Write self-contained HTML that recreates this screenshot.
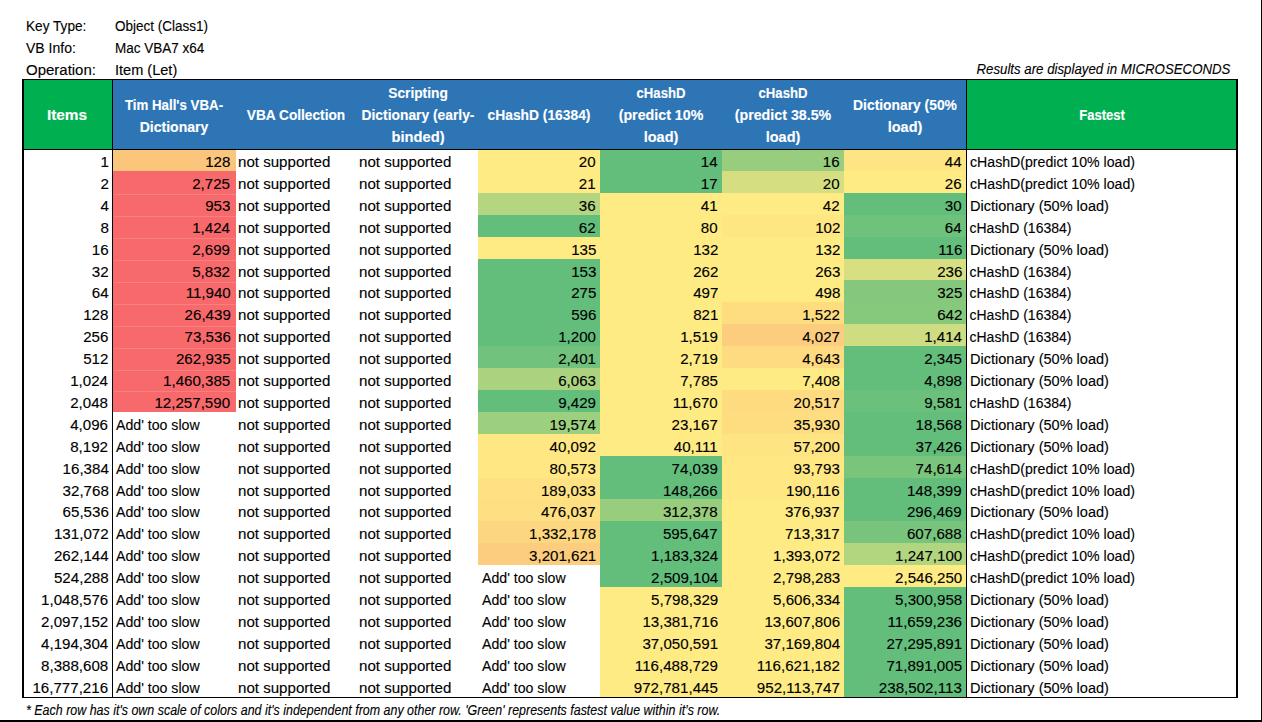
<!DOCTYPE html>
<html><head><meta charset="utf-8"><style>
html,body{margin:0;padding:0;background:#fff;}
body{width:1262px;height:722px;position:relative;overflow:hidden;font-family:"Liberation Sans", sans-serif;font-size:14px;color:#000;}
.a{position:absolute;}
.t{position:absolute;white-space:pre;line-height:1;-webkit-text-stroke:0.12px currentColor;}
.r{transform-origin:100% 0;}
.l{transform-origin:0 0;}
.c{transform-origin:50% 0;}
.h{font-weight:bold;color:#fff;}
.i{font-style:italic;}
</style></head><body>

<div class="a" style="left:1260.6px;top:0;width:1.4px;height:722px;background:#000"></div>
<div class="a" style="left:0;top:720.2px;width:1262px;height:1.8px;background:#000"></div>
<div class="t l " style="top:19.15px;transform:scaleX(0.9730);left:26.00px;">Key Type:</div>
<div class="t l " style="top:19.15px;transform:scaleX(0.9640);left:115.30px;">Object (Class1)</div>
<div class="t l " style="top:40.85px;left:26.00px;">VB Info:</div>
<div class="t l " style="top:40.85px;transform:scaleX(0.9650);left:115.30px;">Mac VBA7 x64</div>
<div class="t l " style="top:62.55px;transform:scaleX(1.0700);left:26.00px;">Operation:</div>
<div class="t l " style="top:62.55px;transform:scaleX(1.0390);left:115.30px;">Item (Let)</div>
<div class="t r i" style="top:62.35px;transform:scaleX(0.9460);right:31.50px;">Results are displayed in MICROSECONDS</div>
<div class="a" style="left:24px;top:80px;width:88.5px;height:69px;background:#00B050"></div>
<div class="a" style="left:112.5px;top:80px;width:854.0px;height:69px;background:#2E75B6"></div>
<div class="a" style="left:966.5px;top:80px;width:270.0px;height:69px;background:#00B050"></div>
<div class="t c h" style="top:108.15px;transform:scaleX(1.1000);left:67.25px;width:0;display:flex;justify-content:center;">Items</div>
<div class="t c h" style="top:98.15px;transform:scaleX(0.9490);left:174.00px;width:0;display:flex;justify-content:center;">Tim Hall's VBA-</div>
<div class="t c h" style="top:120.05px;transform:scaleX(1.0030);left:174.00px;width:0;display:flex;justify-content:center;">Dictionary</div>
<div class="t c h" style="top:108.15px;transform:scaleX(0.9780);left:296.25px;width:0;display:flex;justify-content:center;">VBA Collection</div>
<div class="t c h" style="top:86.15px;transform:scaleX(0.9810);left:417.50px;width:0;display:flex;justify-content:center;">Scripting</div>
<div class="t c h" style="top:108.05px;transform:scaleX(0.9875);left:417.50px;width:0;display:flex;justify-content:center;">Dictionary (early-</div>
<div class="t c h" style="top:129.65px;transform:scaleX(1.0500);left:417.50px;width:0;display:flex;justify-content:center;">binded)</div>
<div class="t c h" style="top:108.15px;transform:scaleX(0.9860);left:539.00px;width:0;display:flex;justify-content:center;">cHashD (16384)</div>
<div class="t c h" style="top:86.15px;transform:scaleX(0.9400);left:661.00px;width:0;display:flex;justify-content:center;">cHashD</div>
<div class="t c h" style="top:108.05px;transform:scaleX(1.0170);left:661.00px;width:0;display:flex;justify-content:center;">(predict 10%</div>
<div class="t c h" style="top:129.65px;transform:scaleX(1.0350);left:661.00px;width:0;display:flex;justify-content:center;">load)</div>
<div class="t c h" style="top:86.15px;transform:scaleX(0.9400);left:783.00px;width:0;display:flex;justify-content:center;">cHashD</div>
<div class="t c h" style="top:108.05px;transform:scaleX(1.0170);left:783.00px;width:0;display:flex;justify-content:center;">(predict 38.5%</div>
<div class="t c h" style="top:129.65px;transform:scaleX(1.0350);left:783.00px;width:0;display:flex;justify-content:center;">load)</div>
<div class="t c h" style="top:98.15px;transform:scaleX(0.9880);left:905.25px;width:0;display:flex;justify-content:center;">Dictionary (50%</div>
<div class="t c h" style="top:120.05px;transform:scaleX(1.0350);left:905.25px;width:0;display:flex;justify-content:center;">load)</div>
<div class="t c h" style="top:108.15px;transform:scaleX(0.9300);left:1101.50px;width:0;display:flex;justify-content:center;">Fastest</div>
<div class="a" style="left:112.5px;top:149.00px;width:123.0px;height:22.00px;background:#FCC57C"></div>
<div class="a" style="left:478px;top:149.00px;width:122px;height:22.00px;background:#FFEB84"></div>
<div class="a" style="left:600px;top:149.00px;width:122px;height:22.00px;background:#63BE7B"></div>
<div class="a" style="left:722px;top:149.00px;width:122px;height:22.00px;background:#98CD7E"></div>
<div class="a" style="left:844px;top:149.00px;width:122.5px;height:22.00px;background:#FEE482"></div>
<div class="t r " style="top:155.05px;transform:scaleX(1.0800);right:1153.50px;">1</div>
<div class="t r " style="top:155.05px;transform:scaleX(1.0800);right:1031.50px;">128</div>
<div class="t l " style="top:155.05px;transform:scaleX(1.0780);left:237.80px;">not supported</div>
<div class="t l " style="top:155.05px;transform:scaleX(1.0780);left:359.30px;">not supported</div>
<div class="t r " style="top:155.05px;transform:scaleX(1.0800);right:666.00px;">20</div>
<div class="t r " style="top:155.05px;transform:scaleX(1.0800);right:544.00px;">14</div>
<div class="t r " style="top:155.05px;transform:scaleX(1.0800);right:422.00px;">16</div>
<div class="t r " style="top:155.05px;transform:scaleX(1.0800);right:300.00px;">44</div>
<div class="t l " style="top:155.05px;transform:scaleX(1.0100);left:969.50px;">cHashD(predict 10% load)</div>
<div class="a" style="left:112.5px;top:170.90px;width:123.0px;height:22.00px;background:#F8696B"></div>
<div class="a" style="left:478px;top:170.90px;width:122px;height:22.00px;background:#FFEB84"></div>
<div class="a" style="left:600px;top:170.90px;width:122px;height:22.00px;background:#63BE7B"></div>
<div class="a" style="left:722px;top:170.90px;width:122px;height:22.00px;background:#D5DF82"></div>
<div class="a" style="left:844px;top:170.90px;width:122.5px;height:22.00px;background:#FFEB84"></div>
<div class="t r " style="top:176.95px;transform:scaleX(1.0800);right:1153.50px;">2</div>
<div class="t r " style="top:176.95px;transform:scaleX(1.0800);right:1031.50px;">2,725</div>
<div class="t l " style="top:176.95px;transform:scaleX(1.0780);left:237.80px;">not supported</div>
<div class="t l " style="top:176.95px;transform:scaleX(1.0780);left:359.30px;">not supported</div>
<div class="t r " style="top:176.95px;transform:scaleX(1.0800);right:666.00px;">21</div>
<div class="t r " style="top:176.95px;transform:scaleX(1.0800);right:544.00px;">17</div>
<div class="t r " style="top:176.95px;transform:scaleX(1.0800);right:422.00px;">20</div>
<div class="t r " style="top:176.95px;transform:scaleX(1.0800);right:300.00px;">26</div>
<div class="t l " style="top:176.95px;transform:scaleX(1.0100);left:969.50px;">cHashD(predict 10% load)</div>
<div class="a" style="left:112.5px;top:192.80px;width:123.0px;height:22.00px;background:#F8696B"></div>
<div class="a" style="left:478px;top:192.80px;width:122px;height:22.00px;background:#B5D580"></div>
<div class="a" style="left:600px;top:192.80px;width:122px;height:22.00px;background:#FFEB84"></div>
<div class="a" style="left:722px;top:192.80px;width:122px;height:22.00px;background:#FFEB84"></div>
<div class="a" style="left:844px;top:192.80px;width:122.5px;height:22.00px;background:#63BE7B"></div>
<div class="a" style="left:113.5px;top:194.30px;width:122.0px;height:1px;background:#F98082"></div>
<div class="t r " style="top:198.85px;transform:scaleX(1.0800);right:1153.50px;">4</div>
<div class="t r " style="top:198.85px;transform:scaleX(1.0800);right:1031.50px;">953</div>
<div class="t l " style="top:198.85px;transform:scaleX(1.0780);left:237.80px;">not supported</div>
<div class="t l " style="top:198.85px;transform:scaleX(1.0780);left:359.30px;">not supported</div>
<div class="t r " style="top:198.85px;transform:scaleX(1.0800);right:666.00px;">36</div>
<div class="t r " style="top:198.85px;transform:scaleX(1.0800);right:544.00px;">41</div>
<div class="t r " style="top:198.85px;transform:scaleX(1.0800);right:422.00px;">42</div>
<div class="t r " style="top:198.85px;transform:scaleX(1.0800);right:300.00px;">30</div>
<div class="t l " style="top:198.85px;transform:scaleX(1.0380);left:969.50px;">Dictionary (50% load)</div>
<div class="a" style="left:112.5px;top:214.70px;width:123.0px;height:22.00px;background:#F8696B"></div>
<div class="a" style="left:478px;top:214.70px;width:122px;height:22.00px;background:#63BE7B"></div>
<div class="a" style="left:600px;top:214.70px;width:122px;height:22.00px;background:#FFEB84"></div>
<div class="a" style="left:722px;top:214.70px;width:122px;height:22.00px;background:#FEE683"></div>
<div class="a" style="left:844px;top:214.70px;width:122.5px;height:22.00px;background:#6EC27C"></div>
<div class="a" style="left:113.5px;top:216.20px;width:122.0px;height:1px;background:#F98082"></div>
<div class="t r " style="top:220.75px;transform:scaleX(1.0800);right:1153.50px;">8</div>
<div class="t r " style="top:220.75px;transform:scaleX(1.0800);right:1031.50px;">1,424</div>
<div class="t l " style="top:220.75px;transform:scaleX(1.0780);left:237.80px;">not supported</div>
<div class="t l " style="top:220.75px;transform:scaleX(1.0780);left:359.30px;">not supported</div>
<div class="t r " style="top:220.75px;transform:scaleX(1.0800);right:666.00px;">62</div>
<div class="t r " style="top:220.75px;transform:scaleX(1.0800);right:544.00px;">80</div>
<div class="t r " style="top:220.75px;transform:scaleX(1.0800);right:422.00px;">102</div>
<div class="t r " style="top:220.75px;transform:scaleX(1.0800);right:300.00px;">64</div>
<div class="t l " style="top:220.75px;left:969.50px;">cHashD (16384)</div>
<div class="a" style="left:112.5px;top:236.60px;width:123.0px;height:22.00px;background:#F8696B"></div>
<div class="a" style="left:478px;top:236.60px;width:122px;height:22.00px;background:#FFEB84"></div>
<div class="a" style="left:600px;top:236.60px;width:122px;height:22.00px;background:#FFEB84"></div>
<div class="a" style="left:722px;top:236.60px;width:122px;height:22.00px;background:#FFEB84"></div>
<div class="a" style="left:844px;top:236.60px;width:122.5px;height:22.00px;background:#63BE7B"></div>
<div class="a" style="left:113.5px;top:238.10px;width:122.0px;height:1px;background:#F98082"></div>
<div class="t r " style="top:242.65px;transform:scaleX(1.0800);right:1153.50px;">16</div>
<div class="t r " style="top:242.65px;transform:scaleX(1.0800);right:1031.50px;">2,699</div>
<div class="t l " style="top:242.65px;transform:scaleX(1.0780);left:237.80px;">not supported</div>
<div class="t l " style="top:242.65px;transform:scaleX(1.0780);left:359.30px;">not supported</div>
<div class="t r " style="top:242.65px;transform:scaleX(1.0800);right:666.00px;">135</div>
<div class="t r " style="top:242.65px;transform:scaleX(1.0800);right:544.00px;">132</div>
<div class="t r " style="top:242.65px;transform:scaleX(1.0800);right:422.00px;">132</div>
<div class="t r " style="top:242.65px;transform:scaleX(1.0800);right:300.00px;">116</div>
<div class="t l " style="top:242.65px;transform:scaleX(1.0380);left:969.50px;">Dictionary (50% load)</div>
<div class="a" style="left:112.5px;top:258.50px;width:123.0px;height:22.00px;background:#F8696B"></div>
<div class="a" style="left:478px;top:258.50px;width:122px;height:22.00px;background:#63BE7B"></div>
<div class="a" style="left:600px;top:258.50px;width:122px;height:22.00px;background:#FFEB84"></div>
<div class="a" style="left:722px;top:258.50px;width:122px;height:22.00px;background:#FFEB84"></div>
<div class="a" style="left:844px;top:258.50px;width:122.5px;height:22.00px;background:#D7DF82"></div>
<div class="a" style="left:113.5px;top:260.00px;width:122.0px;height:1px;background:#F98082"></div>
<div class="t r " style="top:264.55px;transform:scaleX(1.0800);right:1153.50px;">32</div>
<div class="t r " style="top:264.55px;transform:scaleX(1.0800);right:1031.50px;">5,832</div>
<div class="t l " style="top:264.55px;transform:scaleX(1.0780);left:237.80px;">not supported</div>
<div class="t l " style="top:264.55px;transform:scaleX(1.0780);left:359.30px;">not supported</div>
<div class="t r " style="top:264.55px;transform:scaleX(1.0800);right:666.00px;">153</div>
<div class="t r " style="top:264.55px;transform:scaleX(1.0800);right:544.00px;">262</div>
<div class="t r " style="top:264.55px;transform:scaleX(1.0800);right:422.00px;">263</div>
<div class="t r " style="top:264.55px;transform:scaleX(1.0800);right:300.00px;">236</div>
<div class="t l " style="top:264.55px;left:969.50px;">cHashD (16384)</div>
<div class="a" style="left:112.5px;top:280.40px;width:123.0px;height:22.00px;background:#F8696B"></div>
<div class="a" style="left:478px;top:280.40px;width:122px;height:22.00px;background:#63BE7B"></div>
<div class="a" style="left:600px;top:280.40px;width:122px;height:22.00px;background:#FFEB84"></div>
<div class="a" style="left:722px;top:280.40px;width:122px;height:22.00px;background:#FFEB84"></div>
<div class="a" style="left:844px;top:280.40px;width:122.5px;height:22.00px;background:#85C87D"></div>
<div class="a" style="left:113.5px;top:281.90px;width:122.0px;height:1px;background:#F98082"></div>
<div class="t r " style="top:286.45px;transform:scaleX(1.0800);right:1153.50px;">64</div>
<div class="t r " style="top:286.45px;transform:scaleX(1.0800);right:1031.50px;">11,940</div>
<div class="t l " style="top:286.45px;transform:scaleX(1.0780);left:237.80px;">not supported</div>
<div class="t l " style="top:286.45px;transform:scaleX(1.0780);left:359.30px;">not supported</div>
<div class="t r " style="top:286.45px;transform:scaleX(1.0800);right:666.00px;">275</div>
<div class="t r " style="top:286.45px;transform:scaleX(1.0800);right:544.00px;">497</div>
<div class="t r " style="top:286.45px;transform:scaleX(1.0800);right:422.00px;">498</div>
<div class="t r " style="top:286.45px;transform:scaleX(1.0800);right:300.00px;">325</div>
<div class="t l " style="top:286.45px;left:969.50px;">cHashD (16384)</div>
<div class="a" style="left:112.5px;top:302.30px;width:123.0px;height:22.00px;background:#F8696B"></div>
<div class="a" style="left:478px;top:302.30px;width:122px;height:22.00px;background:#63BE7B"></div>
<div class="a" style="left:600px;top:302.30px;width:122px;height:22.00px;background:#FFEB84"></div>
<div class="a" style="left:722px;top:302.30px;width:122px;height:22.00px;background:#FEDD81"></div>
<div class="a" style="left:844px;top:302.30px;width:122.5px;height:22.00px;background:#86C97D"></div>
<div class="a" style="left:113.5px;top:303.80px;width:122.0px;height:1px;background:#F98082"></div>
<div class="t r " style="top:308.35px;transform:scaleX(1.0800);right:1153.50px;">128</div>
<div class="t r " style="top:308.35px;transform:scaleX(1.0800);right:1031.50px;">26,439</div>
<div class="t l " style="top:308.35px;transform:scaleX(1.0780);left:237.80px;">not supported</div>
<div class="t l " style="top:308.35px;transform:scaleX(1.0780);left:359.30px;">not supported</div>
<div class="t r " style="top:308.35px;transform:scaleX(1.0800);right:666.00px;">596</div>
<div class="t r " style="top:308.35px;transform:scaleX(1.0800);right:544.00px;">821</div>
<div class="t r " style="top:308.35px;transform:scaleX(1.0800);right:422.00px;">1,522</div>
<div class="t r " style="top:308.35px;transform:scaleX(1.0800);right:300.00px;">642</div>
<div class="t l " style="top:308.35px;left:969.50px;">cHashD (16384)</div>
<div class="a" style="left:112.5px;top:324.20px;width:123.0px;height:22.00px;background:#F8696B"></div>
<div class="a" style="left:478px;top:324.20px;width:122px;height:22.00px;background:#63BE7B"></div>
<div class="a" style="left:600px;top:324.20px;width:122px;height:22.00px;background:#FFEB84"></div>
<div class="a" style="left:722px;top:324.20px;width:122px;height:22.00px;background:#FDCD7F"></div>
<div class="a" style="left:844px;top:324.20px;width:122.5px;height:22.00px;background:#CEDD81"></div>
<div class="a" style="left:113.5px;top:325.70px;width:122.0px;height:1px;background:#F98082"></div>
<div class="t r " style="top:330.25px;transform:scaleX(1.0800);right:1153.50px;">256</div>
<div class="t r " style="top:330.25px;transform:scaleX(1.0800);right:1031.50px;">73,536</div>
<div class="t l " style="top:330.25px;transform:scaleX(1.0780);left:237.80px;">not supported</div>
<div class="t l " style="top:330.25px;transform:scaleX(1.0780);left:359.30px;">not supported</div>
<div class="t r " style="top:330.25px;transform:scaleX(1.0800);right:666.00px;">1,200</div>
<div class="t r " style="top:330.25px;transform:scaleX(1.0800);right:544.00px;">1,519</div>
<div class="t r " style="top:330.25px;transform:scaleX(1.0800);right:422.00px;">4,027</div>
<div class="t r " style="top:330.25px;transform:scaleX(1.0800);right:300.00px;">1,414</div>
<div class="t l " style="top:330.25px;left:969.50px;">cHashD (16384)</div>
<div class="a" style="left:112.5px;top:346.10px;width:123.0px;height:22.00px;background:#F8696B"></div>
<div class="a" style="left:478px;top:346.10px;width:122px;height:22.00px;background:#71C27C"></div>
<div class="a" style="left:600px;top:346.10px;width:122px;height:22.00px;background:#FFEB84"></div>
<div class="a" style="left:722px;top:346.10px;width:122px;height:22.00px;background:#FEDB80"></div>
<div class="a" style="left:844px;top:346.10px;width:122.5px;height:22.00px;background:#63BE7B"></div>
<div class="a" style="left:113.5px;top:347.60px;width:122.0px;height:1px;background:#F98082"></div>
<div class="t r " style="top:352.15px;transform:scaleX(1.0800);right:1153.50px;">512</div>
<div class="t r " style="top:352.15px;transform:scaleX(1.0800);right:1031.50px;">262,935</div>
<div class="t l " style="top:352.15px;transform:scaleX(1.0780);left:237.80px;">not supported</div>
<div class="t l " style="top:352.15px;transform:scaleX(1.0780);left:359.30px;">not supported</div>
<div class="t r " style="top:352.15px;transform:scaleX(1.0800);right:666.00px;">2,401</div>
<div class="t r " style="top:352.15px;transform:scaleX(1.0800);right:544.00px;">2,719</div>
<div class="t r " style="top:352.15px;transform:scaleX(1.0800);right:422.00px;">4,643</div>
<div class="t r " style="top:352.15px;transform:scaleX(1.0800);right:300.00px;">2,345</div>
<div class="t l " style="top:352.15px;transform:scaleX(1.0380);left:969.50px;">Dictionary (50% load)</div>
<div class="a" style="left:112.5px;top:368.00px;width:123.0px;height:22.00px;background:#F8696B"></div>
<div class="a" style="left:478px;top:368.00px;width:122px;height:22.00px;background:#AAD27F"></div>
<div class="a" style="left:600px;top:368.00px;width:122px;height:22.00px;background:#FFEB84"></div>
<div class="a" style="left:722px;top:368.00px;width:122px;height:22.00px;background:#FFEB84"></div>
<div class="a" style="left:844px;top:368.00px;width:122.5px;height:22.00px;background:#63BE7B"></div>
<div class="a" style="left:113.5px;top:369.50px;width:122.0px;height:1px;background:#F98082"></div>
<div class="t r " style="top:374.05px;transform:scaleX(1.0800);right:1153.50px;">1,024</div>
<div class="t r " style="top:374.05px;transform:scaleX(1.0800);right:1031.50px;">1,460,385</div>
<div class="t l " style="top:374.05px;transform:scaleX(1.0780);left:237.80px;">not supported</div>
<div class="t l " style="top:374.05px;transform:scaleX(1.0780);left:359.30px;">not supported</div>
<div class="t r " style="top:374.05px;transform:scaleX(1.0800);right:666.00px;">6,063</div>
<div class="t r " style="top:374.05px;transform:scaleX(1.0800);right:544.00px;">7,785</div>
<div class="t r " style="top:374.05px;transform:scaleX(1.0800);right:422.00px;">7,408</div>
<div class="t r " style="top:374.05px;transform:scaleX(1.0800);right:300.00px;">4,898</div>
<div class="t l " style="top:374.05px;transform:scaleX(1.0380);left:969.50px;">Dictionary (50% load)</div>
<div class="a" style="left:112.5px;top:389.90px;width:123.0px;height:22.00px;background:#F8696B"></div>
<div class="a" style="left:478px;top:389.90px;width:122px;height:22.00px;background:#63BE7B"></div>
<div class="a" style="left:600px;top:389.90px;width:122px;height:22.00px;background:#FFEB84"></div>
<div class="a" style="left:722px;top:389.90px;width:122px;height:22.00px;background:#FEDB81"></div>
<div class="a" style="left:844px;top:389.90px;width:122.5px;height:22.00px;background:#6BC17C"></div>
<div class="a" style="left:113.5px;top:391.40px;width:122.0px;height:1px;background:#F98082"></div>
<div class="t r " style="top:395.95px;transform:scaleX(1.0800);right:1153.50px;">2,048</div>
<div class="t r " style="top:395.95px;transform:scaleX(1.0800);right:1031.50px;">12,257,590</div>
<div class="t l " style="top:395.95px;transform:scaleX(1.0780);left:237.80px;">not supported</div>
<div class="t l " style="top:395.95px;transform:scaleX(1.0780);left:359.30px;">not supported</div>
<div class="t r " style="top:395.95px;transform:scaleX(1.0800);right:666.00px;">9,429</div>
<div class="t r " style="top:395.95px;transform:scaleX(1.0800);right:544.00px;">11,670</div>
<div class="t r " style="top:395.95px;transform:scaleX(1.0800);right:422.00px;">20,517</div>
<div class="t r " style="top:395.95px;transform:scaleX(1.0800);right:300.00px;">9,581</div>
<div class="t l " style="top:395.95px;left:969.50px;">cHashD (16384)</div>
<div class="a" style="left:478px;top:411.80px;width:122px;height:22.00px;background:#9CCF7E"></div>
<div class="a" style="left:600px;top:411.80px;width:122px;height:22.00px;background:#FFEB84"></div>
<div class="a" style="left:722px;top:411.80px;width:122px;height:22.00px;background:#FEDD81"></div>
<div class="a" style="left:844px;top:411.80px;width:122.5px;height:22.00px;background:#63BE7B"></div>
<div class="t r " style="top:417.85px;transform:scaleX(1.0800);right:1153.50px;">4,096</div>
<div class="t l " style="top:417.85px;transform:scaleX(1.0100);left:116.00px;">Add' too slow</div>
<div class="t l " style="top:417.85px;transform:scaleX(1.0780);left:237.80px;">not supported</div>
<div class="t l " style="top:417.85px;transform:scaleX(1.0780);left:359.30px;">not supported</div>
<div class="t r " style="top:417.85px;transform:scaleX(1.0800);right:666.00px;">19,574</div>
<div class="t r " style="top:417.85px;transform:scaleX(1.0800);right:544.00px;">23,167</div>
<div class="t r " style="top:417.85px;transform:scaleX(1.0800);right:422.00px;">35,930</div>
<div class="t r " style="top:417.85px;transform:scaleX(1.0800);right:300.00px;">18,568</div>
<div class="t l " style="top:417.85px;transform:scaleX(1.0380);left:969.50px;">Dictionary (50% load)</div>
<div class="a" style="left:478px;top:433.70px;width:122px;height:22.00px;background:#FFE883"></div>
<div class="a" style="left:600px;top:433.70px;width:122px;height:22.00px;background:#FFEB84"></div>
<div class="a" style="left:722px;top:433.70px;width:122px;height:22.00px;background:#FEE482"></div>
<div class="a" style="left:844px;top:433.70px;width:122.5px;height:22.00px;background:#63BE7B"></div>
<div class="t r " style="top:439.75px;transform:scaleX(1.0800);right:1153.50px;">8,192</div>
<div class="t l " style="top:439.75px;transform:scaleX(1.0100);left:116.00px;">Add' too slow</div>
<div class="t l " style="top:439.75px;transform:scaleX(1.0780);left:237.80px;">not supported</div>
<div class="t l " style="top:439.75px;transform:scaleX(1.0780);left:359.30px;">not supported</div>
<div class="t r " style="top:439.75px;transform:scaleX(1.0800);right:666.00px;">40,092</div>
<div class="t r " style="top:439.75px;transform:scaleX(1.0800);right:544.00px;">40,111</div>
<div class="t r " style="top:439.75px;transform:scaleX(1.0800);right:422.00px;">57,200</div>
<div class="t r " style="top:439.75px;transform:scaleX(1.0800);right:300.00px;">37,426</div>
<div class="t l " style="top:439.75px;transform:scaleX(1.0380);left:969.50px;">Dictionary (50% load)</div>
<div class="a" style="left:478px;top:455.60px;width:122px;height:22.00px;background:#FFE783"></div>
<div class="a" style="left:600px;top:455.60px;width:122px;height:22.00px;background:#63BE7B"></div>
<div class="a" style="left:722px;top:455.60px;width:122px;height:22.00px;background:#FFE783"></div>
<div class="a" style="left:844px;top:455.60px;width:122.5px;height:22.00px;background:#79C57C"></div>
<div class="t r " style="top:461.65px;transform:scaleX(1.0800);right:1153.50px;">16,384</div>
<div class="t l " style="top:461.65px;transform:scaleX(1.0100);left:116.00px;">Add' too slow</div>
<div class="t l " style="top:461.65px;transform:scaleX(1.0780);left:237.80px;">not supported</div>
<div class="t l " style="top:461.65px;transform:scaleX(1.0780);left:359.30px;">not supported</div>
<div class="t r " style="top:461.65px;transform:scaleX(1.0800);right:666.00px;">80,573</div>
<div class="t r " style="top:461.65px;transform:scaleX(1.0800);right:544.00px;">74,039</div>
<div class="t r " style="top:461.65px;transform:scaleX(1.0800);right:422.00px;">93,793</div>
<div class="t r " style="top:461.65px;transform:scaleX(1.0800);right:300.00px;">74,614</div>
<div class="t l " style="top:461.65px;transform:scaleX(1.0100);left:969.50px;">cHashD(predict 10% load)</div>
<div class="a" style="left:478px;top:477.50px;width:122px;height:22.00px;background:#FEE182"></div>
<div class="a" style="left:600px;top:477.50px;width:122px;height:22.00px;background:#63BE7B"></div>
<div class="a" style="left:722px;top:477.50px;width:122px;height:22.00px;background:#FFE883"></div>
<div class="a" style="left:844px;top:477.50px;width:122.5px;height:22.00px;background:#63BE7B"></div>
<div class="t r " style="top:483.55px;transform:scaleX(1.0800);right:1153.50px;">32,768</div>
<div class="t l " style="top:483.55px;transform:scaleX(1.0100);left:116.00px;">Add' too slow</div>
<div class="t l " style="top:483.55px;transform:scaleX(1.0780);left:237.80px;">not supported</div>
<div class="t l " style="top:483.55px;transform:scaleX(1.0780);left:359.30px;">not supported</div>
<div class="t r " style="top:483.55px;transform:scaleX(1.0800);right:666.00px;">189,033</div>
<div class="t r " style="top:483.55px;transform:scaleX(1.0800);right:544.00px;">148,266</div>
<div class="t r " style="top:483.55px;transform:scaleX(1.0800);right:422.00px;">190,116</div>
<div class="t r " style="top:483.55px;transform:scaleX(1.0800);right:300.00px;">148,399</div>
<div class="t l " style="top:483.55px;transform:scaleX(1.0100);left:969.50px;">cHashD(predict 10% load)</div>
<div class="a" style="left:478px;top:499.40px;width:122px;height:22.00px;background:#FEDF81"></div>
<div class="a" style="left:600px;top:499.40px;width:122px;height:22.00px;background:#98CD7E"></div>
<div class="a" style="left:722px;top:499.40px;width:122px;height:22.00px;background:#FFEB84"></div>
<div class="a" style="left:844px;top:499.40px;width:122.5px;height:22.00px;background:#63BE7B"></div>
<div class="t r " style="top:505.45px;transform:scaleX(1.0800);right:1153.50px;">65,536</div>
<div class="t l " style="top:505.45px;transform:scaleX(1.0100);left:116.00px;">Add' too slow</div>
<div class="t l " style="top:505.45px;transform:scaleX(1.0780);left:237.80px;">not supported</div>
<div class="t l " style="top:505.45px;transform:scaleX(1.0780);left:359.30px;">not supported</div>
<div class="t r " style="top:505.45px;transform:scaleX(1.0800);right:666.00px;">476,037</div>
<div class="t r " style="top:505.45px;transform:scaleX(1.0800);right:544.00px;">312,378</div>
<div class="t r " style="top:505.45px;transform:scaleX(1.0800);right:422.00px;">376,937</div>
<div class="t r " style="top:505.45px;transform:scaleX(1.0800);right:300.00px;">296,469</div>
<div class="t l " style="top:505.45px;transform:scaleX(1.0380);left:969.50px;">Dictionary (50% load)</div>
<div class="a" style="left:478px;top:521.30px;width:122px;height:22.00px;background:#FDD780"></div>
<div class="a" style="left:600px;top:521.30px;width:122px;height:22.00px;background:#63BE7B"></div>
<div class="a" style="left:722px;top:521.30px;width:122px;height:22.00px;background:#FFEB84"></div>
<div class="a" style="left:844px;top:521.30px;width:122.5px;height:22.00px;background:#78C47D"></div>
<div class="t r " style="top:527.35px;transform:scaleX(1.0800);right:1153.50px;">131,072</div>
<div class="t l " style="top:527.35px;transform:scaleX(1.0100);left:116.00px;">Add' too slow</div>
<div class="t l " style="top:527.35px;transform:scaleX(1.0780);left:237.80px;">not supported</div>
<div class="t l " style="top:527.35px;transform:scaleX(1.0780);left:359.30px;">not supported</div>
<div class="t r " style="top:527.35px;transform:scaleX(1.0800);right:666.00px;">1,332,178</div>
<div class="t r " style="top:527.35px;transform:scaleX(1.0800);right:544.00px;">595,647</div>
<div class="t r " style="top:527.35px;transform:scaleX(1.0800);right:422.00px;">713,317</div>
<div class="t r " style="top:527.35px;transform:scaleX(1.0800);right:300.00px;">607,688</div>
<div class="t l " style="top:527.35px;transform:scaleX(1.0100);left:969.50px;">cHashD(predict 10% load)</div>
<div class="a" style="left:478px;top:543.20px;width:122px;height:22.00px;background:#FDCD7F"></div>
<div class="a" style="left:600px;top:543.20px;width:122px;height:22.00px;background:#63BE7B"></div>
<div class="a" style="left:722px;top:543.20px;width:122px;height:22.00px;background:#FFEB84"></div>
<div class="a" style="left:844px;top:543.20px;width:122.5px;height:22.00px;background:#B2D580"></div>
<div class="t r " style="top:549.25px;transform:scaleX(1.0800);right:1153.50px;">262,144</div>
<div class="t l " style="top:549.25px;transform:scaleX(1.0100);left:116.00px;">Add' too slow</div>
<div class="t l " style="top:549.25px;transform:scaleX(1.0780);left:237.80px;">not supported</div>
<div class="t l " style="top:549.25px;transform:scaleX(1.0780);left:359.30px;">not supported</div>
<div class="t r " style="top:549.25px;transform:scaleX(1.0800);right:666.00px;">3,201,621</div>
<div class="t r " style="top:549.25px;transform:scaleX(1.0800);right:544.00px;">1,183,324</div>
<div class="t r " style="top:549.25px;transform:scaleX(1.0800);right:422.00px;">1,393,072</div>
<div class="t r " style="top:549.25px;transform:scaleX(1.0800);right:300.00px;">1,247,100</div>
<div class="t l " style="top:549.25px;transform:scaleX(1.0100);left:969.50px;">cHashD(predict 10% load)</div>
<div class="a" style="left:600px;top:565.10px;width:122px;height:22.00px;background:#63BE7B"></div>
<div class="a" style="left:722px;top:565.10px;width:122px;height:22.00px;background:#FFEB84"></div>
<div class="a" style="left:844px;top:565.10px;width:122.5px;height:22.00px;background:#FFEB84"></div>
<div class="t r " style="top:571.15px;transform:scaleX(1.0800);right:1153.50px;">524,288</div>
<div class="t l " style="top:571.15px;transform:scaleX(1.0100);left:116.00px;">Add' too slow</div>
<div class="t l " style="top:571.15px;transform:scaleX(1.0780);left:237.80px;">not supported</div>
<div class="t l " style="top:571.15px;transform:scaleX(1.0780);left:359.30px;">not supported</div>
<div class="t l " style="top:571.15px;transform:scaleX(1.0100);left:481.50px;">Add' too slow</div>
<div class="t r " style="top:571.15px;transform:scaleX(1.0800);right:544.00px;">2,509,104</div>
<div class="t r " style="top:571.15px;transform:scaleX(1.0800);right:422.00px;">2,798,283</div>
<div class="t r " style="top:571.15px;transform:scaleX(1.0800);right:300.00px;">2,546,250</div>
<div class="t l " style="top:571.15px;transform:scaleX(1.0100);left:969.50px;">cHashD(predict 10% load)</div>
<div class="a" style="left:600px;top:587.00px;width:122px;height:22.00px;background:#FFEB84"></div>
<div class="a" style="left:722px;top:587.00px;width:122px;height:22.00px;background:#FFEB84"></div>
<div class="a" style="left:844px;top:587.00px;width:122.5px;height:22.00px;background:#63BE7B"></div>
<div class="t r " style="top:593.05px;transform:scaleX(1.0800);right:1153.50px;">1,048,576</div>
<div class="t l " style="top:593.05px;transform:scaleX(1.0100);left:116.00px;">Add' too slow</div>
<div class="t l " style="top:593.05px;transform:scaleX(1.0780);left:237.80px;">not supported</div>
<div class="t l " style="top:593.05px;transform:scaleX(1.0780);left:359.30px;">not supported</div>
<div class="t l " style="top:593.05px;transform:scaleX(1.0100);left:481.50px;">Add' too slow</div>
<div class="t r " style="top:593.05px;transform:scaleX(1.0800);right:544.00px;">5,798,329</div>
<div class="t r " style="top:593.05px;transform:scaleX(1.0800);right:422.00px;">5,606,334</div>
<div class="t r " style="top:593.05px;transform:scaleX(1.0800);right:300.00px;">5,300,958</div>
<div class="t l " style="top:593.05px;transform:scaleX(1.0380);left:969.50px;">Dictionary (50% load)</div>
<div class="a" style="left:600px;top:608.90px;width:122px;height:22.00px;background:#FFEB84"></div>
<div class="a" style="left:722px;top:608.90px;width:122px;height:22.00px;background:#FFEB84"></div>
<div class="a" style="left:844px;top:608.90px;width:122.5px;height:22.00px;background:#63BE7B"></div>
<div class="t r " style="top:614.95px;transform:scaleX(1.0800);right:1153.50px;">2,097,152</div>
<div class="t l " style="top:614.95px;transform:scaleX(1.0100);left:116.00px;">Add' too slow</div>
<div class="t l " style="top:614.95px;transform:scaleX(1.0780);left:237.80px;">not supported</div>
<div class="t l " style="top:614.95px;transform:scaleX(1.0780);left:359.30px;">not supported</div>
<div class="t l " style="top:614.95px;transform:scaleX(1.0100);left:481.50px;">Add' too slow</div>
<div class="t r " style="top:614.95px;transform:scaleX(1.0800);right:544.00px;">13,381,716</div>
<div class="t r " style="top:614.95px;transform:scaleX(1.0800);right:422.00px;">13,607,806</div>
<div class="t r " style="top:614.95px;transform:scaleX(1.0800);right:300.00px;">11,659,236</div>
<div class="t l " style="top:614.95px;transform:scaleX(1.0380);left:969.50px;">Dictionary (50% load)</div>
<div class="a" style="left:600px;top:630.80px;width:122px;height:22.00px;background:#FFEB84"></div>
<div class="a" style="left:722px;top:630.80px;width:122px;height:22.00px;background:#FFEB84"></div>
<div class="a" style="left:844px;top:630.80px;width:122.5px;height:22.00px;background:#63BE7B"></div>
<div class="t r " style="top:636.85px;transform:scaleX(1.0800);right:1153.50px;">4,194,304</div>
<div class="t l " style="top:636.85px;transform:scaleX(1.0100);left:116.00px;">Add' too slow</div>
<div class="t l " style="top:636.85px;transform:scaleX(1.0780);left:237.80px;">not supported</div>
<div class="t l " style="top:636.85px;transform:scaleX(1.0780);left:359.30px;">not supported</div>
<div class="t l " style="top:636.85px;transform:scaleX(1.0100);left:481.50px;">Add' too slow</div>
<div class="t r " style="top:636.85px;transform:scaleX(1.0800);right:544.00px;">37,050,591</div>
<div class="t r " style="top:636.85px;transform:scaleX(1.0800);right:422.00px;">37,169,804</div>
<div class="t r " style="top:636.85px;transform:scaleX(1.0800);right:300.00px;">27,295,891</div>
<div class="t l " style="top:636.85px;transform:scaleX(1.0380);left:969.50px;">Dictionary (50% load)</div>
<div class="a" style="left:600px;top:652.70px;width:122px;height:22.00px;background:#FFEB84"></div>
<div class="a" style="left:722px;top:652.70px;width:122px;height:22.00px;background:#FFEB84"></div>
<div class="a" style="left:844px;top:652.70px;width:122.5px;height:22.00px;background:#63BE7B"></div>
<div class="t r " style="top:658.75px;transform:scaleX(1.0800);right:1153.50px;">8,388,608</div>
<div class="t l " style="top:658.75px;transform:scaleX(1.0100);left:116.00px;">Add' too slow</div>
<div class="t l " style="top:658.75px;transform:scaleX(1.0780);left:237.80px;">not supported</div>
<div class="t l " style="top:658.75px;transform:scaleX(1.0780);left:359.30px;">not supported</div>
<div class="t l " style="top:658.75px;transform:scaleX(1.0100);left:481.50px;">Add' too slow</div>
<div class="t r " style="top:658.75px;transform:scaleX(1.0800);right:544.00px;">116,488,729</div>
<div class="t r " style="top:658.75px;transform:scaleX(1.0800);right:422.00px;">116,621,182</div>
<div class="t r " style="top:658.75px;transform:scaleX(1.0800);right:300.00px;">71,891,005</div>
<div class="t l " style="top:658.75px;transform:scaleX(1.0380);left:969.50px;">Dictionary (50% load)</div>
<div class="a" style="left:600px;top:674.60px;width:122px;height:22.00px;background:#FFEB84"></div>
<div class="a" style="left:722px;top:674.60px;width:122px;height:22.00px;background:#FFEB84"></div>
<div class="a" style="left:844px;top:674.60px;width:122.5px;height:22.00px;background:#63BE7B"></div>
<div class="t r " style="top:680.65px;transform:scaleX(1.0800);right:1153.50px;">16,777,216</div>
<div class="t l " style="top:680.65px;transform:scaleX(1.0100);left:116.00px;">Add' too slow</div>
<div class="t l " style="top:680.65px;transform:scaleX(1.0780);left:237.80px;">not supported</div>
<div class="t l " style="top:680.65px;transform:scaleX(1.0780);left:359.30px;">not supported</div>
<div class="t l " style="top:680.65px;transform:scaleX(1.0100);left:481.50px;">Add' too slow</div>
<div class="t r " style="top:680.65px;transform:scaleX(1.0800);right:544.00px;">972,781,445</div>
<div class="t r " style="top:680.65px;transform:scaleX(1.0800);right:422.00px;">952,113,747</div>
<div class="t r " style="top:680.65px;transform:scaleX(1.0800);right:300.00px;">238,502,113</div>
<div class="t l " style="top:680.65px;transform:scaleX(1.0380);left:969.50px;">Dictionary (50% load)</div>
<div class="a" style="left:22px;top:79px;width:2px;height:619px;background:#000"></div>
<div class="a" style="left:22px;top:79px;width:1216px;height:1.25px;background:#000"></div>
<div class="a" style="left:1236px;top:79px;width:1.5px;height:619px;background:#000"></div>
<div class="a" style="left:22px;top:696.5px;width:1215.5px;height:1.5px;background:#000"></div>
<div class="a" style="left:22px;top:148.8px;width:1215.5px;height:1.4px;background:#000"></div>
<div class="a" style="left:112.3px;top:79px;width:1.2px;height:619px;background:#000"></div>
<div class="a" style="left:966.1px;top:79px;width:1.3px;height:619px;background:#000"></div>
<div class="t l i" style="top:702.75px;transform:scaleX(0.8890);left:25.50px;">* Each row has it's own scale of colors and it's independent from any other row. 'Green' represents fastest value within it’s row.</div>
</body></html>
